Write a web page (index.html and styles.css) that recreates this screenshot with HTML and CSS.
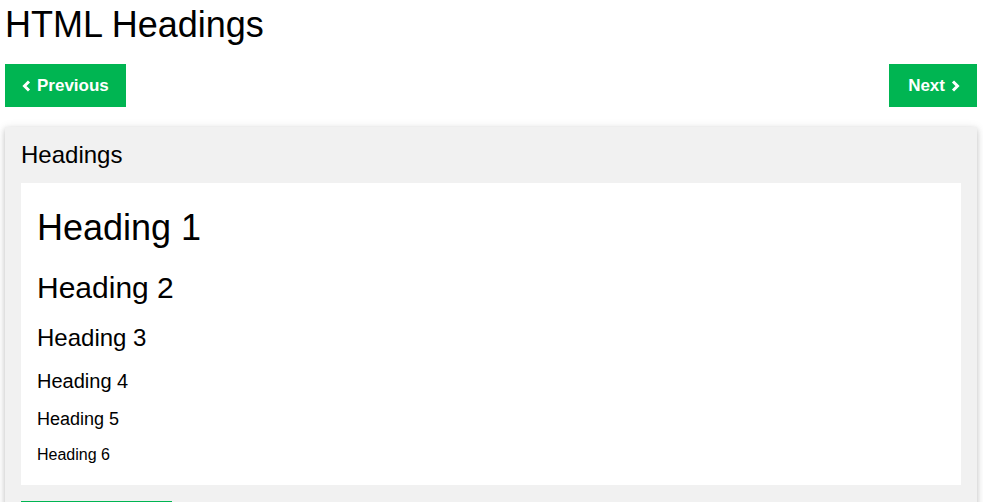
FILE: index.html
```html
<!DOCTYPE html>
<html lang="en">
<head>
<meta charset="utf-8">
<title>HTML Headings</title>
<link rel="stylesheet" href="styles.css">
</head>
<body>
<div class="page">
  <h1 class="title">HTML Headings</h1>
  <div class="nav">
    <a class="btn btn-prev" href="#"><svg class="chev" width="9" height="12" viewBox="0 0 9 12"><polyline points="7,1.5 2.5,6 7,10.5" fill="none" stroke="#fff" stroke-width="3"/></svg>Previous</a>
    <a class="btn btn-next" href="#">Next<svg class="chev chev-r" width="9" height="12" viewBox="0 0 9 12"><polyline points="2,1.5 6.5,6 2,10.5" fill="none" stroke="#fff" stroke-width="3"/></svg></a>
  </div>
  <div class="panel">
    <h3 class="panel-title">Headings</h3>
    <div class="example">
      <h1 class="h h1">Heading 1</h1>
      <h2 class="h h2">Heading 2</h2>
      <h3 class="h h3">Heading 3</h3>
      <h4 class="h h4">Heading 4</h4>
      <h5 class="h h5">Heading 5</h5>
      <h6 class="h h6">Heading 6</h6>
    </div>
    <a class="btn try" href="#">Try it Yourself &raquo;</a>
  </div>
</div>
</body>
</html>
```
FILE: styles.css
```css
html, body {
  margin: 0;
  padding: 0;
  background: #fff;
  color: #000;
  font-family: "Liberation Sans", Arial, Helvetica, sans-serif;
  font-size: 15px;
  line-height: 1.5;
  overflow: hidden;
}
.page {
  padding: 0 6px 0 5px;
}
.title {
  font-size: 36px;
  font-weight: 400;
  line-height: 50px;
  margin: 0 0 14px 0;
}
.nav {
  display: flex;
  justify-content: space-between;
}
.btn {
  display: inline-flex;
  align-items: center;
  background: #00b552;
  color: #fff;
  text-decoration: none;
  font-weight: 700;
  font-size: 17px;
  line-height: 25px;
  padding: 9px 17px;
}
.btn-prev {
  padding-left: 17px;
}
.btn-next {
  padding-left: 19px;
  padding-right: 17px;
}
.chev {
  margin-right: 6px;
}
.chev-r {
  margin-right: 0;
  margin-left: 6px;
}
.panel {
  margin-top: 20px;
  background: #f1f1f1;
  padding: 0.01em 16px;
  box-shadow: 0 2px 5px 0 rgba(0,0,0,0.16), 0 2px 10px 0 rgba(0,0,0,0.12);
}
.panel-title {
  font-size: 24px;
  font-weight: 400;
  margin: 10px 0;
}
.example {
  background: #fff;
  padding: 8px 16px;
}
.h {
  font-weight: 400;
  margin: 10px 0;
}
.h1 { font-size: 36px; }
.h2 { font-size: 30px; }
.h3 { font-size: 24px; }
.h4 { font-size: 20px; }
.h5 { font-size: 18px; }
.h6 { font-size: 16px; }
.try {
  font-size: 16px;
  padding: 9px 16px;
  margin: 16px 0;
}
```
